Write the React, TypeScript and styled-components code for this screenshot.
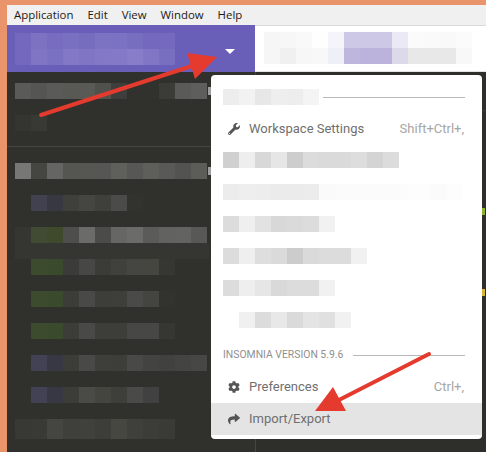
import React from "react";
import styled, { createGlobalStyle } from "styled-components";
import { FaWrench, FaCog, FaShare } from "react-icons/fa";

const Global = createGlobalStyle`
  html, body { margin: 0; padding: 0; background: #e9946a; }
  body { width: 486px; height: 452px; overflow: hidden; }
`;

const Page = styled.div`
  position: relative;
  width: 486px;
  height: 452px;
  overflow: hidden;
  box-sizing: border-box;
  padding: 5px 0 0 7px;
  background: #e9946a;
  display: flex;
  flex-direction: column;
`;

const MenuBar = styled.nav`
  height: 20px;
  flex: none;
  display: flex;
  align-items: center;
  padding-left: 7px;
  gap: 14px;
  background: #f0f0f0;
  font: 11.4px/20px "Open Sans", sans-serif;
  color: #1a1a1a;
`;

const MenuLabel = styled.span`
  display: block;
`;

const Body = styled.div`
  flex: 1;
  display: flex;
  flex-direction: column;
  background: #2e2f2a;
`;

const TopRow = styled.div`
  height: 47px;
  flex: none;
  display: flex;
`;

const WorkspaceHeader = styled.div`
  width: 248px;
  flex: none;
  box-sizing: border-box;
  background: #695eb8;
  display: flex;
  align-items: center;
  justify-content: space-between;
  padding: 8px 20px 8px 8px;
`;

const Caret = styled.span`
  width: 0;
  height: 0;
  margin-top: 5px;
  border-left: 5px solid transparent;
  border-right: 5px solid transparent;
  border-top: 5px solid #fff;
`;

const UrlBar = styled.div`
  flex: 1;
  box-sizing: border-box;
  border-top: 1px solid #d9d9d9;
  border-bottom: 1px solid #e3e3e3;
  background: #fff;
  padding: 6px 0 0 9px;
`;

const Stack = styled.div`
  display: flex;
  flex-direction: column;
`;

const Content = styled.div`
  flex: 1;
  display: flex;
  min-height: 0;
`;

const Mosaic = styled.div<{ $h?: number; $band?: boolean }>`
  display: flex;
  align-items: center;
  height: ${(p) => p.$h ?? 16}px;
  ${(p) => (p.$band ? "width: 194px; box-shadow: 0 16px 0 #353632;" : "")}
`;

const Cell = styled.i<{ $c: string }>`
  display: block;
  flex: none;
  width: 16px;
  height: 100%;
  background: ${(p) => p.$c};
`;

const Sliver = styled.i`
  display: block;
  flex: none;
  width: 3px;
  height: 8px;
  margin-left: 1px;
  background: #9d9d9b;
`;

const Sidebar = styled.aside`
  width: 248px;
  flex: none;
  display: flex;
  flex-direction: column;
  padding: 11px 0 0 8px;
  box-sizing: border-box;
  gap: 16px;
  background: #30312c;
`;

const SidebarDivider = styled.div`
  height: 1px;
  margin: -1px 0 0 -8px;
  width: 204px;
  background: #44453f;
`;

const SectionGroup = styled.div`
  display: flex;
  flex-direction: column;
  gap: 16px;
`;

const Editor = styled.main`
  flex: 1;
  position: relative;
  border-left: 1px solid #45463f;
  background: #2e2f2a;
`;

const EditorHead = styled.div`
  height: 38px;
  border-bottom: 1px solid #3c3d37;
`;

const CodeHint = styled.i<{ $c: string; $top: number }>`
  position: absolute;
  left: 226px;
  top: ${(p) => p.$top}px;
  width: 3px;
  height: 7px;
  background: ${(p) => p.$c};
`;

const Dropdown = styled.div`
  position: absolute;
  left: 211px;
  top: 75px;
  width: 271px;
  height: 364px;
  box-sizing: border-box;
  background: #fff;
  border-radius: 4px;
  padding-top: 14px;
  display: flex;
  flex-direction: column;
  overflow: hidden;
  font: 13px/16px Roboto, sans-serif;
  color: #6f6f6f;
`;

const SectionHead = styled.div<{ $gap: number; $mt?: number }>`
  height: 16px;
  flex: none;
  display: flex;
  align-items: center;
  gap: ${(p) => p.$gap}px;
  margin-top: ${(p) => p.$mt ?? 0}px;
  padding: 0 17px 0 12px;
  font-size: 10.4px;
  color: #8f8f8f;
`;

const Rule = styled.div`
  flex: 1;
  height: 1px;
  background: #b9b9b9;
`;

const Item = styled.div<{ $active?: boolean; $mt?: number }>`
  height: 32px;
  flex: none;
  display: flex;
  align-items: center;
  margin-top: ${(p) => p.$mt ?? 0}px;
  padding: 0 18px 0 17px;
  background: ${(p) => (p.$active ? "#e4e4e4" : "transparent")};
`;

const ItemIcon = styled.span`
  width: 21px;
  flex: none;
  display: flex;
  align-items: center;
  font-size: 12px;
  color: #555;
`;

const ItemLabel = styled.span`
  flex: 1;
`;

const Shortcut = styled.span`
  color: #a6a6a6;
`;

const BlurredItem = styled.div<{ $mt?: number; $pl?: number }>`
  flex: none;
  margin-top: ${(p) => p.$mt ?? 16}px;
  padding-left: ${(p) => p.$pl ?? 12}px;
`;

const Overlay = styled.svg`
  position: absolute;
  left: 0;
  top: 0;
  pointer-events: none;
`;

const Cells = ({ colors }: { colors: string[] }) => (
  <>
    {colors.map((c, i) => (
      <Cell key={i} $c={c} />
    ))}
  </>
);

const base = "#30312c";
const sidebar: string[][] = [
  ["#5a5a58", "#555654", "#5a5b58", "#585954", "#595a55", "#50514d", "#3e3f3c", "#31322e", "#31322e", "#3b3c38", "#5a5a58", "#5e5e5c"],
  ["#343531", "#383935"],
];
const sidebarB: string[][] = [
  ["#777776", "#454642", "#656563", "#555652", "#565753", "#565654", "#5f605c", "#575755", "#5e5e5b", "#595a57", "#535351", "#5c5d59"],
  [base, "#42414f", "#383842", "#3f403b", "#454641", "#3f403c", "#4b4b49", "#32332e"],
  ["#353632", "#414a32", "#3f4a2d", "#4e4f4c", "#6b6b69", "#4b4b49", "#666664", "#6b6b69", "#5b5b59", "#626260", "#636361", "#585856"],
  [base, "#3c4a2d", "#3a4a2c", "#3b3c39", "#474845", "#3b3c38", "#40413c", "#454641", "#45463f", "#363733"],
  [base, "#3c4a2d", "#3a4a2c", "#3c3c39", "#494a47", "#3d3d3a", "#3e3f3a", "#4a4a48", "#444541", "#32332e"],
  [base, "#3c4a2d", "#3a4a2c", "#3c3c39", "#494a47", "#3d3e39", "#3d3e3a", "#474845", "#474846", "#363733"],
  [base, "#434255", "#383844", "#3c3c39", "#494a47", "#3e3f3a", "#3d3e3a", "#494a47", "#434441", "#414240", "#444543", "#474845"],
  [base, "#434255", "#383844", "#3c3c39", "#4a4a47", "#44453f", "#3e3f3a", "#4a4a48", "#404140"],
];
const sidebarLast = ["#383934", "#393a36", "#454642", "#3f403b", "#40413c", "#3d3e3a", "#464741", "#3f403b", "#3c3d39", "#3a3b37"];

const headerRows = [
  ["#7368be", "#7d72c2", "#776cbf", "#7a70c1", "#776dbf", "#7d73c3", "#7c72c3", "#786ec0", "#7368bd", "#7469be"],
  ["#7368be", "#7f75c4", "#7b71c2", "#8278c6", "#7f75c4", "#8278c6", "#8379c6", "#877dc8", "#8076c5", "#796fc1"],
];
const urlRows = [
  ["#f6f6f6", "#f7f7f7", "#f9f9f9", "#fefefe", "#f4f4fa", "#cdc8e6", "#cdc8e6", "#cdc8e6", "#ebe9f5", "#fbfbfb", "#fafafa", "#f9f9f9", "#fbfbfb"],
  ["#f6f6f6", "#f0f0f0", "#f7f7f7", "#f8f8f8", "#efeff8", "#bfb6de", "#bcb3dc", "#bcb3dc", "#dcdaea", "#e8e8e8", "#e8e8e8", "#e8e8e8", "#f8f8f8"],
];
const menu = {
  head: ["#ededed", "#f2f2f2", "#e7e7e7", "#eeeeee", "#ededed", "#f4f4f4"],
  a: ["#d0d0d0", "#eeeeee", "#d8d8d8", "#e6e6e6", "#cdcdcd", "#dcdcdc", "#dadada", "#dadada", "#dddddd", "#d4d4d4", "#dcdcdc"],
  b: ["#ececec", "#eeeeee", "#ededed", "#ebebeb", "#ebebeb", "#ececec", "#fafafa", "#fbfbfb", "#fbfbfb", "#fbfbfb", "#fbfbfb", "#fcfcfc", "#fdfdfd", "#fbfbfb", "#fdfdfd"],
  c: ["#dcdcdc", "#efefef", "#e2e2e2", "#d8d8d8", "#dadada", "#dcdcdc", "#f1f1f1"],
  d: ["#dcdcdc", "#efefef", "#dedede", "#dadada", "#cccccc", "#dadada", "#dcdcdc", "#dcdcdc", "#f1f1f1"],
  e: ["#dcdcdc", "#eeeeee", "#e6e6e6", "#d9d9d9", "#dcdcdc", "#dcdcdc", "#f1f1f1"],
  f: ["#f0f0f0", "#dcdcdc", "#e8e8e8", "#dadada", "#e4e4e4", "#e0e0e0", "#f1f1f1"],
};

export default function App() {
  return (
    <Page>
      <Global />
      <MenuBar>
        <MenuLabel>Application</MenuLabel>
        <MenuLabel>Edit</MenuLabel>
        <MenuLabel>View</MenuLabel>
        <MenuLabel>Window</MenuLabel>
        <MenuLabel>Help</MenuLabel>
      </MenuBar>
      <Body>
        <TopRow>
          <WorkspaceHeader>
            <Stack>
              {headerRows.map((r, i) => (
                <Mosaic key={i}>
                  <Cells colors={r} />
                </Mosaic>
              ))}
            </Stack>
            <Caret />
          </WorkspaceHeader>
          <UrlBar>
            {urlRows.map((r, i) => (
              <Mosaic key={i}>
                <Cells colors={r} />
              </Mosaic>
            ))}
          </UrlBar>
        </TopRow>
        <Content>
          <Sidebar>
            <Mosaic>
              <Cells colors={sidebar[0]} />
              <Sliver />
            </Mosaic>
            <Mosaic>
              <Cells colors={sidebar[1]} />
            </Mosaic>
            <SidebarDivider />
            <SectionGroup>
              {sidebarB.map((r, i) => (
                <Mosaic key={i} $band={i === 2}>
                  <Cells colors={r} />
                  {i === 0 && <Sliver />}
                </Mosaic>
              ))}
              <Mosaic $h={20}>
                <Cells colors={sidebarLast} />
              </Mosaic>
            </SectionGroup>
          </Sidebar>
          <Editor>
            <EditorHead />
            <CodeHint $c="#8ab32f" $top={136} />
            <CodeHint $c="#d9b53a" $top={217} />
          </Editor>
        </Content>
      </Body>

      <Dropdown>
        <SectionHead $gap={4}>
          <Mosaic>
            <Cells colors={menu.head} />
          </Mosaic>
          <Rule />
        </SectionHead>
        <Item $mt={8}>
          <ItemIcon>
            <FaWrench />
          </ItemIcon>
          <ItemLabel>Workspace Settings</ItemLabel>
          <Shortcut>Shift+Ctrl+,</Shortcut>
        </Item>
        <BlurredItem $mt={7}>
          <Mosaic>
            <Cells colors={menu.a} />
          </Mosaic>
        </BlurredItem>
        <BlurredItem>
          <Mosaic>
            <Cells colors={menu.b} />
          </Mosaic>
        </BlurredItem>
        <BlurredItem>
          <Mosaic>
            <Cells colors={menu.c} />
          </Mosaic>
        </BlurredItem>
        <BlurredItem>
          <Mosaic>
            <Cells colors={menu.d} />
          </Mosaic>
        </BlurredItem>
        <BlurredItem>
          <Mosaic>
            <Cells colors={menu.e} />
          </Mosaic>
        </BlurredItem>
        <BlurredItem $pl={28}>
          <Mosaic>
            <Cells colors={menu.f} />
          </Mosaic>
        </BlurredItem>
        <SectionHead $gap={10} $mt={19}>
          <span>INSOMNIA VERSION 5.9.6</span>
          <Rule />
        </SectionHead>
        <Item $mt={8}>
          <ItemIcon>
            <FaCog />
          </ItemIcon>
          <ItemLabel>Preferences</ItemLabel>
          <Shortcut>Ctrl+,</Shortcut>
        </Item>
        <Item $active>
          <ItemIcon>
            <FaShare />
          </ItemIcon>
          <ItemLabel>Import/Export</ItemLabel>
        </Item>
      </Dropdown>

      <Overlay width="486" height="452" viewBox="0 0 486 452">
        <line x1="41" y1="115" x2="195" y2="65" stroke="#e53a2e" strokeWidth="4" strokeLinecap="round" />
        <polygon points="217,57 187,53 195,79" fill="#e53a2e" />
        <line x1="429" y1="354" x2="335" y2="402" stroke="#e53a2e" strokeWidth="4" strokeLinecap="round" />
        <polygon points="315,411 333,387 346,411" fill="#e53a2e" />
      </Overlay>
    </Page>
  );
}
